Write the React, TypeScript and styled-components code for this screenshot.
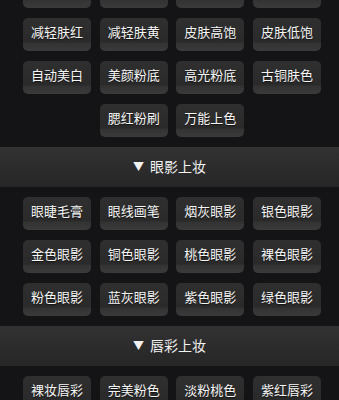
import styled, { createGlobalStyle } from 'styled-components';
import { Fragment } from 'react';

const GlobalStyle = createGlobalStyle`
  html, body {
    margin: 0;
    padding: 0;
    background: #141416;
    overflow: hidden;
  }
  body {
    font-family: "Noto Sans CJK SC", "Noto Sans", sans-serif;
  }
`;

const Page = styled.div`
  display: flex;
  flex-direction: column;
  gap: 10px;
  margin-top: -25px;
`;

const Grid = styled.div`
  display: flex;
  flex-wrap: wrap;
  justify-content: center;
  gap: 10px 8.67px;
  width: 298px;
  padding-left: 23px;
`;

const Chip = styled.button`
  width: 68px;
  height: 33px;
  padding: 0 0 6px;
  border: none;
  border-radius: 5px;
  background: linear-gradient(
    to bottom,
    #2f2f2f 0%,
    #2a2a2a 73%,
    #333333 76%,
    #3a3a3a 100%
  );
  color: #f6f6f6;
  font-family: inherit;
  font-size: 13px;
  line-height: 18px;
  text-shadow: 0 1px 1px rgba(0, 0, 0, 0.6);
  cursor: pointer;
`;

const Header = styled.div`
  height: 40px;
  display: flex;
  align-items: center;
  justify-content: center;
  gap: 6px;
  padding-bottom: 2px;
  box-sizing: border-box;
  background: linear-gradient(to bottom, #323232, #262626);
  color: #f2f2f2;
  font-size: 14px;
`;

const Arrow = styled.span`
  font-size: 11px;
`;

const sections: { title?: string; items: string[] }[] = [
  {
    items: [
      '美白嫩肤', '磨皮美颜', '祛斑祛痘', '肤色均匀',
      '减轻肤红', '减轻肤黄', '皮肤高饱', '皮肤低饱',
      '自动美白', '美颜粉底', '高光粉底', '古铜肤色',
      '腮红粉刷', '万能上色',
    ],
  },
  {
    title: '眼影上妆',
    items: [
      '眼睫毛膏', '眼线画笔', '烟灰眼影', '银色眼影',
      '金色眼影', '铜色眼影', '桃色眼影', '裸色眼影',
      '粉色眼影', '蓝灰眼影', '紫色眼影', '绿色眼影',
    ],
  },
  {
    title: '唇彩上妆',
    items: ['裸妆唇彩', '完美粉色', '淡粉桃色', '紫红唇彩'],
  },
];

export default function App() {
  return (
    <>
      <GlobalStyle />
      <Page>
        {sections.map((s, i) => (
          <Fragment key={i}>
            {s.title && (
              <Header>
                <Arrow>▼</Arrow>
                {s.title}
              </Header>
            )}
            <Grid>
              {s.items.map((it) => (
                <Chip key={it}>{it}</Chip>
              ))}
            </Grid>
          </Fragment>
        ))}
      </Page>
    </>
  );
}
